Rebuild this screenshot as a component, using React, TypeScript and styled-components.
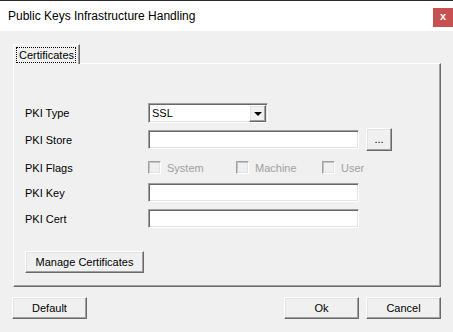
import styled, { createGlobalStyle, css } from 'styled-components'

const GlobalStyle = createGlobalStyle`
  html, body {
    margin: 0;
    padding: 0;
    background: #f0f0f0;
  }
  body {
    font-family: "Liberation Sans", Arial, sans-serif;
    font-size: 11px;
    color: #000;
  }
`

const raised = css`
  background: #f0f0f0;
  border-style: solid;
  border-width: 1px;
  border-color: #fff #696969 #696969 #fff;
  box-shadow: inset -1px -1px 0 #a0a0a0, inset 1px 1px 0 #e3e3e3;
`

const sunken = css`
  background: #fff;
  border-style: solid;
  border-width: 1px;
  border-color: #a0a0a0 #fff #fff #a0a0a0;
  box-shadow: inset 1px 1px 0 #696969, inset -1px -1px 0 #e3e3e3;
`

const Window = styled.div`
  width: 453px;
  height: 332px;
  display: flex;
  flex-direction: column;
  background: #f0f0f0;
  overflow: hidden;
`

const TitleBar = styled.div`
  height: 30px;
  border-top: 1px solid #2b2b2b;
  background: #fff;
  display: flex;
  align-items: flex-start;
  justify-content: space-between;
`

const Title = styled.div`
  font-size: 12px;
  line-height: 16px;
  padding: 7px 0 0 8px;
`

const CloseButton = styled.div`
  width: 20px;
  height: 19px;
  margin-top: 7px;
  background: #c75050;
  color: #fff;
  font-weight: bold;
  font-size: 11px;
  line-height: 17px;
  text-align: center;
`

const Body = styled.div`
  padding: 13px 12px 0 13px;
  display: flex;
  flex-direction: column;
`

const TabStrip = styled.div`
  display: flex;
  height: 19px;
  position: relative;
  z-index: 1;
`

const Tab = styled.div`
  width: 67px;
  height: 20px;
  box-sizing: border-box;
  border-style: solid;
  border-width: 1px 1px 0 1px;
  border-color: #fff #696969 transparent #fff;
  box-shadow: inset -1px 0 0 #a0a0a0;
  background: #f0f0f0;
  padding: 2px 3px 0 2px;
`

const TabFocus = styled.div`
  border: 1px dotted #000;
  height: 14px;
  line-height: 14px;
  padding: 0 0 0 2px;
  font-size: 11px;
`

const Panel = styled.div`
  width: 428px;
  height: 224px;
  box-sizing: border-box;
  border-style: solid;
  border-width: 1px;
  border-color: #fff #696969 #696969 #fff;
  box-shadow: inset -1px -1px 0 #a0a0a0;
  padding: 39px 0 0 11px;
  display: flex;
  flex-direction: column;
`

const FieldRow = styled.div<{ $top: number; $height: number }>`
  display: flex;
  align-items: center;
  margin-top: ${({ $top }) => $top}px;
  height: ${({ $height }) => $height}px;
`

const Label = styled.div`
  width: 123px;
  flex: none;
  font-size: 11px;
`

const Select = styled.div`
  ${sunken};
  box-sizing: border-box;
  width: 120px;
  height: 20px;
  display: flex;
  align-items: center;
  justify-content: space-between;
  padding: 1px 1px 1px 3px;
  font-size: 11px;
`

const DropButton = styled.div`
  ${raised};
  box-sizing: border-box;
  width: 17px;
  height: 17px;
  display: flex;
  align-items: center;
  justify-content: center;
`

const Arrow = styled.div`
  width: 0;
  height: 0;
  border-left: 4px solid transparent;
  border-right: 4px solid transparent;
  border-top: 4px solid #000;
  margin-top: 1px;
`

const TextInput = styled.div`
  ${sunken};
  box-sizing: border-box;
  width: 211px;
  height: 19px;
`

const BrowseButton = styled.div`
  ${raised};
  box-sizing: border-box;
  width: 26px;
  height: 23px;
  margin-left: 7px;
  text-align: center;
  line-height: 20px;
  font-size: 11px;
`

const Flag = styled.div<{ $width: number }>`
  width: ${({ $width }) => $width}px;
  display: flex;
  align-items: center;
  gap: 6px;
  color: #a0a0a0;
  font-size: 11px;
`

const CheckBox = styled.div`
  width: 13px;
  height: 13px;
  box-sizing: border-box;
  border-style: solid;
  border-width: 1px;
  border-color: #a0a0a0 #fff #fff #a0a0a0;
  box-shadow: inset 1px 1px 0 #c4c4c4, inset -1px -1px 0 #e3e3e3;
  background: #f0f0f0;
  flex: none;
`

const Button = styled.div<{ $width: number }>`
  ${raised};
  box-sizing: border-box;
  width: ${({ $width }) => $width}px;
  height: 22px;
  line-height: 20px;
  text-align: center;
  font-size: 11px;
`

const ManageRow = styled.div`
  margin-top: 23px;
`

const Footer = styled.div`
  display: flex;
  margin-top: 10px;
  margin-left: -1px;
  gap: 7px;
`

const Spacer = styled.div`
  flex: 1;
`

export default function App() {
  return (
    <Window>
      <GlobalStyle />
      <TitleBar>
        <Title>Public Keys Infrastructure Handling</Title>
        <CloseButton>x</CloseButton>
      </TitleBar>
      <Body>
        <TabStrip>
          <Tab>
            <TabFocus>Certificates</TabFocus>
          </Tab>
        </TabStrip>
        <Panel>
          <FieldRow $top={0} $height={20}>
            <Label>PKI Type</Label>
            <Select>
              SSL
              <DropButton>
                <Arrow />
              </DropButton>
            </Select>
          </FieldRow>
          <FieldRow $top={5} $height={23}>
            <Label>PKI Store</Label>
            <TextInput />
            <BrowseButton>...</BrowseButton>
          </FieldRow>
          <FieldRow $top={10} $height={13}>
            <Label>PKI Flags</Label>
            <Flag $width={88}>
              <CheckBox />
              System
            </Flag>
            <Flag $width={86}>
              <CheckBox />
              Machine
            </Flag>
            <Flag $width={60}>
              <CheckBox />
              User
            </Flag>
          </FieldRow>
          <FieldRow $top={9} $height={19}>
            <Label>PKI Key</Label>
            <TextInput />
          </FieldRow>
          <FieldRow $top={7} $height={19}>
            <Label>PKI Cert</Label>
            <TextInput />
          </FieldRow>
          <ManageRow>
            <Button $width={119}>Manage Certificates</Button>
          </ManageRow>
        </Panel>
        <Footer>
          <Button $width={75}>Default</Button>
          <Spacer />
          <Button $width={75}>Ok</Button>
          <Button $width={75}>Cancel</Button>
        </Footer>
      </Body>
    </Window>
  )
}
